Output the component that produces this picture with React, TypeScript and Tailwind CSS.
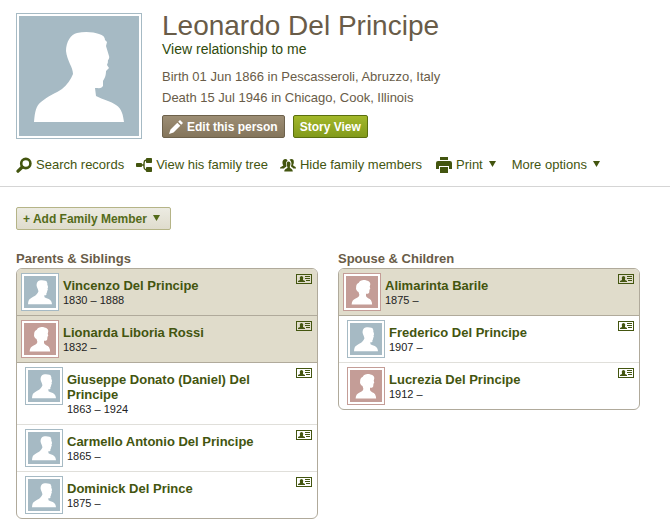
import type { ReactNode } from 'react';

type Gender = 'male' | 'female';

interface Person {
  name: string;
  years: string;
  gender: Gender;
}

const parents: Person[] = [
  { name: 'Vincenzo Del Principe', years: '1830 – 1888', gender: 'male' },
  { name: 'Lionarda Liboria Rossi', years: '1832 –', gender: 'female' },
];

const siblings: Person[] = [
  { name: 'Giuseppe Donato (Daniel) Del Principe', years: '1863 – 1924', gender: 'male' },
  { name: 'Carmello Antonio Del Principe', years: '1865 –', gender: 'male' },
  { name: 'Dominick Del Prince', years: '1875 –', gender: 'male' },
];

const spouses: Person[] = [{ name: 'Alimarinta Barile', years: '1875 –', gender: 'female' }];

const children: Person[] = [
  { name: 'Frederico Del Principe', years: '1907 –', gender: 'male' },
  { name: 'Lucrezia Del Principe', years: '1912 –', gender: 'female' },
];

function MaleSilhouette({ className }: { className: string }) {
  return (
    <svg viewBox="0 0 120 120" className={className} aria-hidden="true">
      <path
        fill="#fff"
        d="M15 106C16 95 17 90 22 86C29 80 37 77 43 73C48 69 52 63 54 58C54 51 48 45 47 35C47 26 52 18 58 17C66 15 75 16 80 18C84 19 86 21 86 24L88 26L87 30L90 40C91 43 88 44 89 46L88 49L90 52L87 55C87 61 85 63 84 65L84 70C82 73 80 72 76 72L77 80C84 84 92 85 97 89C103 93 104 99 105 106Z"
      />
    </svg>
  );
}

function FemaleSilhouette({ className }: { className: string }) {
  return (
    <svg viewBox="0 0 120 120" className={className} aria-hidden="true">
      <path
        fill="#fff"
        d="M21 107C22 93 27 88 36 84C44 80 50 78 50 70L47 60C40 56 36 50 38 42C38 33 41 28 48 25C52 16 65 13 77 17C87 19 92 24 91 32L89 40L91 48L88 52L87 62C85 67 80 67 75 67L75 73C75 78 78 80 83 83C92 86 98 93 98 107Z"
      />
    </svg>
  );
}

function SearchIcon() {
  return (
    <svg viewBox="0 0 16 16" className="size-4" fill="none" stroke="currentColor" aria-hidden="true">
      <circle cx="9.8" cy="6.5" r="4.6" strokeWidth="2.6" />
      <path d="M6.3 10L2 14.2" strokeWidth="3.2" strokeLinecap="round" />
    </svg>
  );
}

function TreeIcon() {
  return (
    <svg viewBox="0 0 16 16" className="size-4" fill="currentColor" aria-hidden="true">
      <rect x="0" y="6" width="6" height="4" rx="0.8" />
      <rect x="10" y="1" width="6" height="5" rx="0.8" />
      <rect x="10" y="10" width="6" height="5" rx="0.8" />
      <path d="M6 8H7.500M10 3Q8 3.500 8 6V10Q8 12.500 10 13" fill="none" stroke="currentColor" strokeWidth="1.4" />
    </svg>
  );
}

function FamilyIcon() {
  return (
    <svg viewBox="0 0 16 14" className="h-[14px] w-4" fill="currentColor" aria-hidden="true">
      <path d="M0 10.500C0 8.500 2.800 8.500 3.300 7.500C1.800 5 2.300 1 5.300 1C6.800 1 7.500 2 7.500 2.800C5.800 4 5.600 6 6.500 8C6.500 9 4.500 9.500 4 10.500Z" />
      <path d="M9.500 1.800C10.500 0.500 13.800 0.500 13.800 3.500C14 5 13.400 6.500 13 7C13.300 8.500 16 8 16 10.500H13.300C12.800 9.500 11 9 11 8C12 6 11.500 3.300 9.500 1.800Z" />
      <path d="M6.800 4.800C7.500 3 10.500 3.200 10.500 5.800C10.500 7.300 9.800 8.300 9.800 9.300C10 10.800 12.800 10.500 12.800 13.500H4.300C4.300 10.500 7.500 10.800 7.600 9.300C7 8.300 6.300 6.600 6.800 4.800Z" />
    </svg>
  );
}

function PrintIcon() {
  return (
    <svg viewBox="0 0 16 16" className="size-4" fill="currentColor" aria-hidden="true">
      <path d="M4 0H12V3H4ZM2 4H14Q16 4 16 6V12H13V9H3V12H0V6Q0 4 2 4ZM4 10H12V16H4Z" />
    </svg>
  );
}

function PencilIcon() {
  return (
    <svg viewBox="0 0 14 14" className="size-[14px]" fill="currentColor" aria-hidden="true">
      <path d="M0 14L1.500 9.500L8.300 2.700L11.300 5.700L4.500 12.500ZM9.200 1.800L11 0L14 3L12.200 4.800Z" />
    </svg>
  );
}

function CardIcon() {
  return (
    <svg viewBox="0 0 16 10" className="h-[10px] w-4" fill="currentColor" aria-hidden="true">
      <rect x="0.500" y="0.500" width="15" height="9" fill="none" stroke="currentColor" />
      <path d="M2 8V7L4 6L3.800 3.500Q4 2 5.500 2Q7 2 7.200 3.500L7 6L9 7V8ZM9 2H14V3H9ZM9 4H14V5H9ZM10 6H14V7H10Z" />
    </svg>
  );
}

function Caret() {
  return (
    <svg viewBox="0 0 7 6" className="mb-0.5 h-1.5 w-[7px]" fill="currentColor" aria-hidden="true">
      <path d="M0 0H7L3.500 6Z" />
    </svg>
  );
}

function Thumbnail({ gender }: { gender: Gender }) {
  const male = gender === 'male';
  return (
    <div className={`size-[38px] shrink-0 border bg-white p-0.5 ${male ? 'border-[#a6bac4]' : 'border-[#c49d97]'}`}>
      <div className={male ? 'bg-[#a6bac4]' : 'bg-[#c49d97]'}>
        {male ? <MaleSilhouette className="size-8" /> : <FemaleSilhouette className="size-8" />}
      </div>
    </div>
  );
}

function PersonRow({ person, variant }: { person: Person; variant: 'head' | 'child' }) {
  return (
    <li
      className={
        variant === 'head'
          ? 'flex gap-1 border-b border-[#b0aa9b] bg-[#e0dccb] py-1 pr-[5px] pl-1'
          : 'flex gap-1 border-b border-[#e0dfda] py-1 pr-[5px] pl-2 last:border-b-0'
      }
    >
      <Thumbnail gender={person.gender} />
      <div className="min-w-0 flex-1 pt-[5px] pb-1">
        <a href="#" className="block text-[13px] leading-[15px] font-bold text-[#43550f] hover:underline">
          {person.name}
        </a>
        <p className="text-[11px] leading-[14px] text-[#222]">{person.years}</p>
      </div>
      <button type="button" aria-label={`Profile card for ${person.name}`} className="ml-8 self-start pt-px text-[#43550f]">
        <CardIcon />
      </button>
    </li>
  );
}

function FamilyGroup({ title, heads, members }: { title: string; heads: Person[]; members: Person[] }) {
  return (
    <section className="max-w-[302px] flex-1">
      <h2 className="text-[13px] leading-[18px] font-bold text-[#695c48]">{title}</h2>
      <ul className="overflow-hidden rounded-md border border-[#b0aa9b]">
        {heads.map((person) => (
          <PersonRow key={person.name} person={person} variant="head" />
        ))}
        {members.map((person) => (
          <PersonRow key={person.name} person={person} variant="child" />
        ))}
      </ul>
    </section>
  );
}

function ToolbarLink({ icon, children }: { icon: ReactNode; children: ReactNode }) {
  return (
    <a href="#" className="flex items-center gap-1 hover:underline">
      {icon}
      {children}
    </a>
  );
}

export default function App() {
  return (
    <div className="min-h-screen bg-white font-['Liberation_Sans',Arial,sans-serif] text-[#695c48]">
      {/* Person header */}
      <header className="flex gap-5 px-4 pt-[13px]">
        <div className="size-[126px] shrink-0 border border-[#a6bac4] p-0.5">
          <div className="bg-[#a6bac4]">
            <MaleSilhouette className="size-[120px]" />
          </div>
        </div>
        <div>
          <h1 className="text-[28px] leading-[26px]">Leonardo Del Principe</h1>
          <a href="#" className="block text-sm leading-5 text-[#2f4a0c] hover:underline">
            View relationship to me
          </a>
          <div className="mt-[7px] text-[13px] leading-[21px]">
            <p>Birth 01 Jun 1866 in Pescasseroli, Abruzzo, Italy</p>
            <p>Death 15 Jul 1946 in Chicago, Cook, Illinois</p>
          </div>
          <div className="mt-[7px] flex gap-2 text-xs font-bold text-white text-shadow-2xs">
            <button
              type="button"
              className="flex h-[23px] items-center gap-1 rounded-xs border border-[#6d614b] bg-linear-to-b from-[#9d8e75] to-[#84755b] px-1.5"
            >
              <PencilIcon />
              Edit this person
            </button>
            <button
              type="button"
              className="h-[23px] rounded-xs border border-[#5a6f0e] bg-linear-to-b from-[#a3b82a] to-[#829a1b] px-1.5"
            >
              Story View
            </button>
          </div>
        </div>
      </header>

      {/* Actions */}
      <nav className="flex h-12 items-center gap-3 border-b border-[#d5d5d5] px-4 pt-1 text-[13px] whitespace-nowrap text-[#43550f]">
        <ToolbarLink icon={<SearchIcon />}>Search records</ToolbarLink>
        <ToolbarLink icon={<TreeIcon />}>View his family tree</ToolbarLink>
        <ToolbarLink icon={<FamilyIcon />}>Hide family members</ToolbarLink>
        <button type="button" className="ml-0.5 flex items-center gap-1.5">
          <span className="flex items-center gap-1">
            <PrintIcon />
            Print
          </span>
          <Caret />
        </button>
        <button type="button" className="ml-1 flex items-center gap-1.5">
          More options
          <Caret />
        </button>
      </nav>

      {/* Family members */}
      <main className="px-4 pt-5 pb-2">
        <button
          type="button"
          className="flex h-[23px] items-center gap-1.5 rounded-xs border border-[#b5b487] bg-linear-to-b from-[#ecebe2] to-[#dfdccd] pr-2.5 pl-1.5 text-xs font-bold text-[#546b1a]"
        >
          + Add Family Member
          <Caret />
        </button>
        <div className="mt-5 flex items-start gap-5">
          <FamilyGroup title="Parents & Siblings" heads={parents} members={siblings} />
          <FamilyGroup title="Spouse & Children" heads={spouses} members={children} />
        </div>
      </main>
    </div>
  );
}
